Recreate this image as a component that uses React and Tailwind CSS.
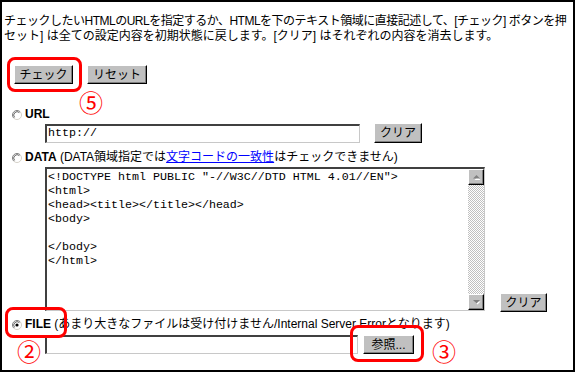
import React from "react";

function Radio({ checked }) {
  return (
    <svg width="10" height="10" viewBox="0 0 10 10" className="shrink-0">
      <circle cx="5" cy="5" r="4" fill="#fff" />
      <path d="M1.8 8.2 A4.5 4.5 0 0 1 8.2 1.8" fill="none" stroke="#808080" strokeWidth="1" />
      <path d="M8.2 1.8 A4.5 4.5 0 0 1 1.8 8.2" fill="none" stroke="#d4d0c8" strokeWidth="1" />
      <path d="M2.6 7.4 A3.4 3.4 0 0 1 7.4 2.6" fill="none" stroke="#404040" strokeWidth="0.8" />
      {checked && <circle cx="5" cy="5" r="1.6" fill="#000" />}
    </svg>
  );
}

function Btn({ children, className = "" }) {
  return (
    <div
      className={
        "flex items-center justify-center bg-[#c0c0c0] border border-t-white border-l-white border-r-black border-b-black shadow-[inset_-1px_-1px_0_#808080] text-[12px] leading-none text-black " +
        className
      }
    >
      {children}
    </div>
  );
}

function Field({ className = "", children }) {
  return (
    <div
      className={
        "bg-white border-t-2 border-l-2 border-t-[#404040] border-l-[#404040] border-r border-b border-r-[#c8c8c8] border-b-[#c8c8c8] " +
        className
      }
    >
      {children}
    </div>
  );
}

function Arrow({ up }) {
  return (
    <div className="w-[16px] h-[16px] bg-[#c0c0c0] border border-t-white border-l-white border-r-black border-b-black shadow-[inset_-1px_-1px_0_#808080] flex items-center justify-center">
      <svg width="9" height="6" viewBox="0 0 9 6">
        {up ? (
          <>
            <path d="M1.5 5 L4.5 2 L7.5 5 Z" fill="#fff" transform="translate(1 1)" />
            <path d="M1 4.5 L4.5 1 L8 4.5 Z" fill="#808080" />
          </>
        ) : (
          <>
            <path d="M1.5 1.5 L4.5 4.5 L7.5 1.5 Z" fill="#fff" transform="translate(1 1)" />
            <path d="M1 1 L4.5 4.5 L8 1 Z" fill="#808080" />
          </>
        )}
      </svg>
    </div>
  );
}

const code = `<!DOCTYPE html PUBLIC "-//W3C//DTD HTML 4.01//EN">
<html>
<head><title></title></head>
<body>

</body>
</html>`;

export default function App() {
  return (
    <div className="relative w-[575px] h-[372px] bg-white overflow-hidden font-['Liberation_Sans','Noto_Sans_CJK_JP',sans-serif] text-[12px] text-black">
      <div className="w-full h-full border-2 border-black flex flex-col overflow-hidden">
        <div className="pt-[12px] pl-[2px] leading-[15px]">
          <div className="whitespace-nowrap tracking-[-0.5px]">
            チェックしたいHTMLのURLを指定するか、HTMLを下のテキスト領域に直接記述して、[チェック] ボタンを押
          </div>
          <div className="whitespace-nowrap">
            セット] は全ての設定内容を初期状態に戻します。[クリア] はそれぞれの内容を消去します。
          </div>
        </div>

        <div className="mt-[21px] ml-[12px] flex gap-[14px]">
          <Btn className="w-[59px] h-[19px]">チェック</Btn>
          <Btn className="w-[60px] h-[19px]">リセット</Btn>
        </div>

        <div className="mt-[23px] ml-[10px] flex items-center gap-[3px] h-[15px] leading-[15px]">
          <Radio />
          <span className="font-bold">URL</span>
        </div>

        <div className="mt-[1px] ml-[43px] flex items-center gap-[14px] h-[20px]">
          <Field className="w-[315px] h-[19px] flex items-center pl-[1px] font-['Liberation_Mono',monospace] text-[11.67px]">
            http://
          </Field>
          <Btn className="w-[48px] h-[20px]">クリア</Btn>
        </div>

        <div className="mt-[7px] ml-[10px] flex items-center gap-[3px] h-[15px] leading-[15px] whitespace-nowrap">
          <Radio />
          <span>
            <span className="font-bold">DATA</span> (DATA領域指定では
            <span className="text-[#0000ff] underline">文字コードの一致性</span>
            はチェックできません)
          </span>
        </div>

        <div className="mt-[2px] ml-[43px] flex items-end gap-[15px]">
          <Field className="w-[440px] h-[144px] flex">
            <pre className="flex-1 pl-[1px] pt-[1px] font-['Liberation_Mono',monospace] text-[11.67px] leading-[14px] overflow-hidden">
              {code}
            </pre>
            <div className="w-[16px] flex flex-col bg-[repeating-conic-gradient(#c0c0c0_0_25%,#ffffff_0_50%)] bg-[length:2px_2px]">
              <Arrow up />
              <div className="flex-1" />
              <Arrow />
            </div>
          </Field>
          <Btn className="w-[47px] h-[19px] mb-[-1px]">クリア</Btn>
        </div>

        <div className="mt-[6px] ml-[10px] flex items-center gap-[3px] h-[15px] leading-[15px] whitespace-nowrap">
          <Radio checked />
          <span>
            <span className="font-bold">FILE</span> (あまり大きなファイルは受け付けません/Internal Server Errorとなります)
          </span>
        </div>

        <div className="mt-[3px] ml-[43px] flex items-center gap-[5px] h-[19px]">
          <Field className="w-[313px] h-[19px]" />
          <Btn className="w-[51px] h-[19px]">参照...</Btn>
        </div>
      </div>

      {/* annotations */}
      <div className="absolute left-[7px] top-[57px] w-[75px] h-[35px] border-[3px] border-[#ff0000] rounded-[8px]" />
      <div className="absolute left-[5px] top-[307px] w-[62px] h-[31px] border-[3px] border-[#ff0000] rounded-[8px]" />
      <div className="absolute left-[350px] top-[325px] w-[74px] h-[37px] border-[3px] border-[#ff0000] rounded-[8px]" />
      <div className="absolute left-[79px] top-[89px] text-[24px] leading-[26px] text-[#ff0000] font-['Noto_Sans_CJK_JP',sans-serif]">⑤</div>
      <div className="absolute left-[17px] top-[338px] text-[24px] leading-[26px] text-[#ff0000] font-['Noto_Sans_CJK_JP',sans-serif]">②</div>
      <div className="absolute left-[432px] top-[338px] text-[24px] leading-[26px] text-[#ff0000] font-['Noto_Sans_CJK_JP',sans-serif]">③</div>
    </div>
  );
}
